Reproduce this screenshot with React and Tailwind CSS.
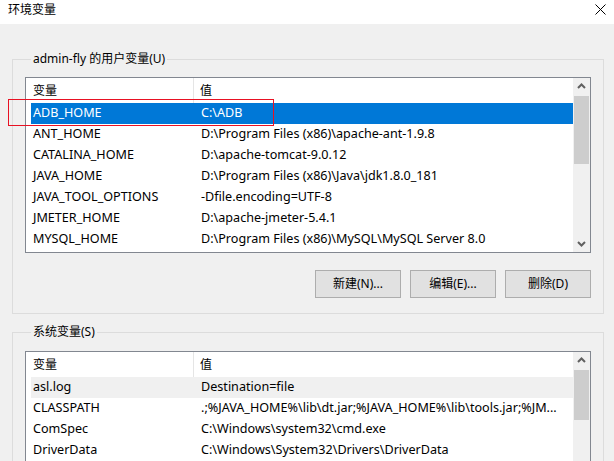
import React from 'react';

const font = { fontFamily: '"Noto Sans", "Noto Sans CJK SC", sans-serif' };

const userVars = [
  ['ADB_HOME', 'C:\\ADB'],
  ['ANT_HOME', 'D:\\Program Files (x86)\\apache-ant-1.9.8'],
  ['CATALINA_HOME', 'D:\\apache-tomcat-9.0.12'],
  ['JAVA_HOME', 'D:\\Program Files (x86)\\Java\\jdk1.8.0_181'],
  ['JAVA_TOOL_OPTIONS', '-Dfile.encoding=UTF-8'],
  ['JMETER_HOME', 'D:\\apache-jmeter-5.4.1'],
  ['MYSQL_HOME', 'D:\\Program Files (x86)\\MySQL\\MySQL Server 8.0'],
];

const sysVars = [
  ['asl.log', 'Destination=file'],
  ['CLASSPATH', '.;%JAVA_HOME%\\lib\\dt.jar;%JAVA_HOME%\\lib\\tools.jar;%JM...'],
  ['ComSpec', 'C:\\Windows\\system32\\cmd.exe'],
  ['DriverData', 'C:\\Windows\\System32\\Drivers\\DriverData'],
];

function Chevron({ up }) {
  return (
    <svg width="17" height="17" viewBox="0 0 17 17">
      <path
        d={up ? 'M5 10 L8.5 6.5 L12 10' : 'M5 7 L8.5 10.5 L12 7'}
        fill="none"
        stroke="#606060"
        strokeWidth="2"
      />
    </svg>
  );
}

function VarList({ rows, selected, hover, thumbHeight, height }) {
  return (
    <div className={`flex border border-[#828790] bg-white ${height}`}>
      <div className="flex-1 flex flex-col overflow-hidden">
        <div className="flex h-[25px] shrink-0 items-center">
          <div className="w-[168px] pl-[7px] border-r border-[#e5e5e5] h-full flex items-center">变量</div>
          <div className="pl-[6px]">值</div>
        </div>
        <div className="pl-[5px] text-[12.6px]">
          {rows.map(([name, value], i) => (
            <div
              key={name + i}
              className={`flex h-[21px] items-center whitespace-nowrap ${
                i === selected ? 'bg-[#0078d7] text-white' : i === hover ? 'bg-[#f0f0f0]' : ''
              }`}
            >
              <div className="w-[168px] pl-[2px] shrink-0">{name}</div>
              <div className="pl-[2px]">{value}</div>
            </div>
          ))}
        </div>
      </div>
      <div className="w-[17px] bg-[#f0f0f0] flex flex-col shrink-0">
        <Chevron up />
        <div className={`mx-[1px] mt-[1px] bg-[#cdcdcd] ${thumbHeight}`}></div>
        <div className="flex-1"></div>
        <Chevron />
      </div>
    </div>
  );
}

export default function App() {
  return (
    <div className="relative w-[614px] h-[461px] overflow-hidden bg-[#f0f0f0] text-[12px] text-black" style={font}>
      {/* title bar */}
      <div className="h-[24px] bg-white flex items-start justify-between pl-[8px] pr-[8px] pt-[1px]">
        <span>环境变量</span>
        <svg width="11" height="11" viewBox="0 0 11 11" className="mt-[3px]">
          <path d="M0.5 0.5 L10.5 10.5 M10.5 0.5 L0.5 10.5" stroke="#000" strokeWidth="1" />
        </svg>
      </div>

      <div className="pl-[12px] pr-[10px] pt-[26px]">
        <fieldset className="border border-[#dcdcdc] px-[12px] pb-[15px] pt-[9px]">
          <legend className="ml-[6px] px-[2px]">admin-fly 的用户变量(U)</legend>
          <VarList rows={userVars} selected={0} height="h-[176px]" thumbHeight="h-[68px]" />
          <div className="flex justify-end gap-[9px] mt-[17px]">
            {['新建(N)...', '编辑(E)...', '删除(D)'].map((b) => (
              <button
                key={b}
                className="w-[86px] h-[28px] border border-[#adadad] bg-[#e1e1e1] flex items-center justify-center"
              >
                {b}
              </button>
            ))}
          </div>
        </fieldset>

        <fieldset className="mt-[9px] border border-[#dcdcdc] px-[12px] pt-[10px] pb-[20px]">
          <legend className="ml-[6px] px-[2px]">系统变量(S)</legend>
          <VarList rows={sysVars} hover={0} height="h-[176px]" thumbHeight="h-[50px]" />
        </fieldset>
      </div>

      {/* red highlight box */}
      <div className="absolute left-[8px] top-[99px] w-[266px] h-[27px] border border-[#e81123]"></div>
    </div>
  );
}
